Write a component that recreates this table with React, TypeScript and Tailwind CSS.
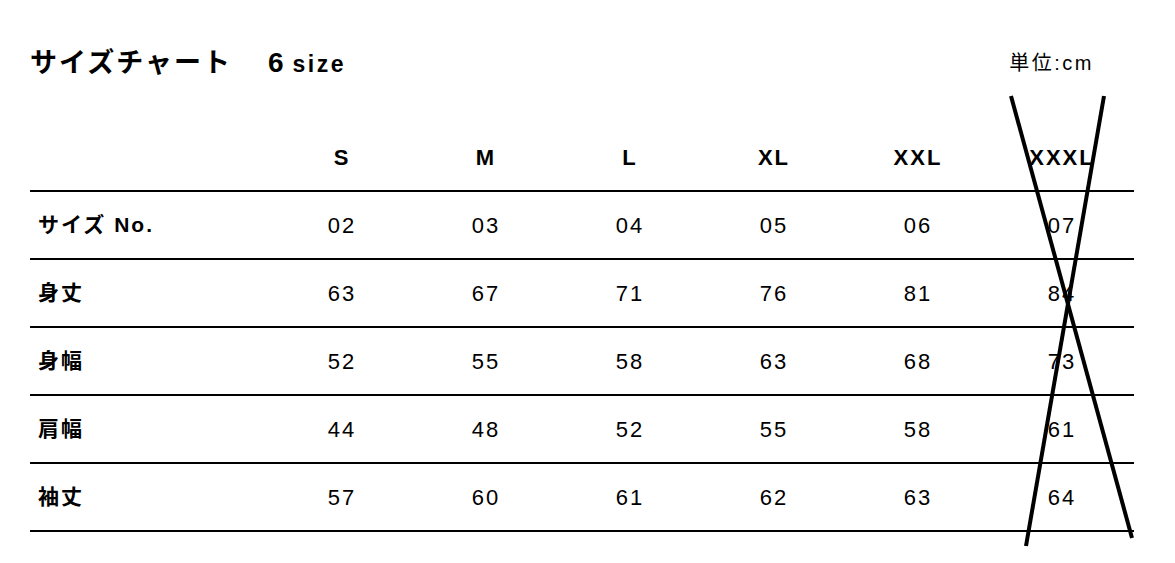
import React from 'react'

const sizes = ['S', 'M', 'L', 'XL', 'XXL', 'XXXL']

const rows: { label: string; values: string[] }[] = [
  { label: 'サイズ No.', values: ['02', '03', '04', '05', '06', '07'] },
  { label: '身丈', values: ['63', '67', '71', '76', '81', '84'] },
  { label: '身幅', values: ['52', '55', '58', '63', '68', '73'] },
  { label: '肩幅', values: ['44', '48', '52', '55', '58', '61'] },
  { label: '袖丈', values: ['57', '60', '61', '62', '63', '64'] },
]

const font = { fontFamily: '"Liberation Sans", "Noto Sans CJK JP", sans-serif' }

export default function App() {
  return (
    <div className="relative w-[1175px] h-[563px] bg-white text-black" style={font}>
      <div className="pl-[30px] pt-[43px] w-[1134px]">
        {/* heading */}
        <div className="flex items-center justify-between h-[40px]">
          <h1 className="flex items-baseline font-bold">
            <span className="text-[27px] tracking-[2px]">サイズチャート</span>
            <span className="text-[28px] ml-[36px]">6</span>
            <span className="text-[23px] ml-[9px] tracking-[2.5px]">size</span>
          </h1>
          <p className="text-[20px] tracking-[2.5px] mr-[40px]">単位:cm</p>
        </div>

        {/* table */}
        <div className="mt-[41px]">
          <div className="grid grid-cols-[240px_repeat(6,144px)] h-[68px] items-center border-b-2 border-black">
            <div />
            {sizes.map((s) => (
              <div key={s} className="text-center text-[22px] font-bold tracking-[2px]">
                {s}
              </div>
            ))}
          </div>
          {rows.map((r) => (
            <div
              key={r.label}
              className="grid grid-cols-[240px_repeat(6,144px)] h-[68px] items-center border-b-2 border-black"
            >
              <div className="pl-[8px] text-[21px] font-bold tracking-[2px]">{r.label}</div>
              {r.values.map((v, i) => (
                <div key={i} className="text-center text-[22px] tracking-[2px]">
                  {v}
                </div>
              ))}
            </div>
          ))}
        </div>
      </div>

      {/* cross over the XXXL column */}
      <svg className="absolute left-0 top-0 pointer-events-none" width="1175" height="563">
        <line x1="1011" y1="96" x2="1132" y2="538" stroke="#000" strokeWidth="4" />
        <line x1="1104" y1="96" x2="1026" y2="546" stroke="#000" strokeWidth="4" />
      </svg>
    </div>
  )
}
